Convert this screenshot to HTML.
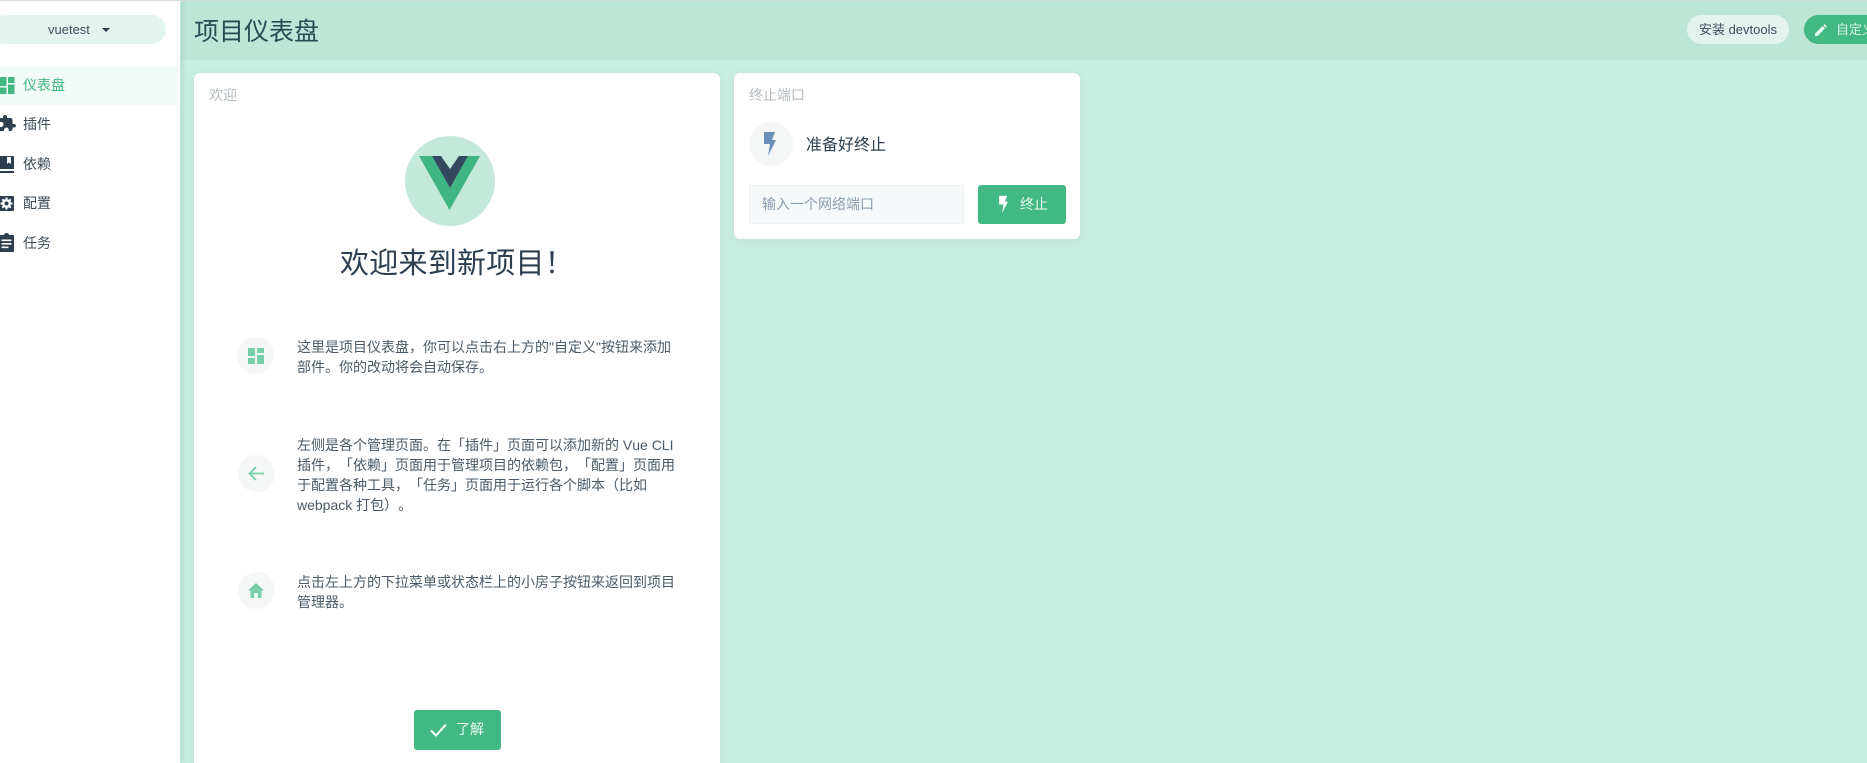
<!DOCTYPE html>
<html lang="zh"><head><meta charset="utf-8"><title>项目仪表盘</title>
<style>
*{box-sizing:border-box}
html,body{margin:0;padding:0;width:1867px;height:763px;overflow:hidden;background:#c8ecdf;font-family:"Liberation Sans","Noto Sans CJK SC",sans-serif;color:#2c3e50;text-spacing-trim:space-all;font-kerning:none}
#root{position:relative;width:1867px;height:763px;overflow:hidden}
.a{position:absolute;white-space:nowrap}
svg{display:block;position:absolute}
.card{position:absolute;background:#fff;border-radius:6px;box-shadow:0 2px 10px rgba(44,62,80,.06)}
.btn{position:absolute;background:#42b983;color:#e8f8f1;border-radius:3px;font-size:14px}
.circ{position:absolute;border-radius:50%;background:#f5f6f6}
p{margin:0;position:absolute;font-size:14px;line-height:20px;color:#4a5a68;left:297px;white-space:nowrap}
</style></head><body><div id="root">
<div class="a" style="left:0;top:0;width:1867px;height:1px;background:#d6dedb;z-index:5"></div>
<div class="a" style="left:181px;top:0;width:1686px;height:60px;background:#bde6d7"></div>
<div class="a" style="left:0;top:0;width:181px;height:763px;background:#fff;border-right:1px solid #bfe6d8;box-shadow:2px 0 4px rgba(90,170,140,.18)"></div>
<div class="a" style="left:-10px;top:15px;width:176px;height:29px;border-radius:15px;background:#e3f5ee"></div>
<div class="a" style="left:48px;top:21px;font-size:13px;line-height:17px;color:#3d4f5f">vuetest</div>
<div class="a" style="left:102px;top:28px;width:0;height:0;border:4px solid transparent;border-top-color:#2c3e50;border-bottom:0"></div>
<div class="a" style="left:0;top:66px;width:178px;height:39px;background:#f3fbf8"></div>

<svg style="left:-1px;top:77px" width="16" height="17" viewBox="0 0 16 17"><path fill="#42b983" d="M0 0h7.500v9H0zM9 0h6.500v6H9zM9 7.500h6.500V17H9zM0 10.500h7.500V17H0z"/></svg>
<div class="a" style="left:23px;top:75px;font-size:14px;line-height:20px;color:#42b983">仪表盘</div>

<svg style="left:-2px;top:115px" width="18" height="19" viewBox="0 0 18 19"><path fill="#2c3e50" d="M16 9h-1.500V5c0-1-1-2-2-2H9V1.800C9 .7 8 0 7 0S5 .7 5 1.800V3H2v4c2.500-.5 3.500 1 3.500 2.500S4 12.500 2 12v4h4c-.3-2 1-3.500 2.500-3.500S11 14 10.800 16h1.700c1 0 2-1 2-2v-1.500H16c1 0 2-.8 2-1.800S17 9 16 9z"/></svg>
<div class="a" style="left:23px;top:114px;font-size:14px;line-height:20px;color:#3b4a58">插件</div>

<svg style="left:-1px;top:155px" width="16" height="20" viewBox="0 0 16 20"><path fill="#2c3e50" d="M1 1h13a1 1 0 0 1 1 1v12H0V2a1 1 0 0 1 1-1zM0 16h15v2H0z"/><path fill="#fff" d="M8 2h4v7l-2-1.500L8 9z"/></svg>
<div class="a" style="left:23px;top:154px;font-size:14px;line-height:20px;color:#3b4a58">依赖</div>

<svg style="left:-1px;top:196px" width="15" height="15" viewBox="0 0 15 15"><path fill="#2c3e50" d="M1 0h13a1 1 0 0 1 1 1v13a1 1 0 0 1-1 1H1a1 1 0 0 1-1-1V1a1 1 0 0 1 1-1z"/><circle cx="7.500" cy="7.500" r="4.500" fill="#fff"/><path stroke="#fff" stroke-width="2" d="M7.500 1.500v12M1.500 7.500h12M3.300 3.300l8.400 8.400M11.700 3.300l-8.400 8.400"/><circle cx="7.500" cy="7.500" r="2" fill="#2c3e50"/></svg>
<div class="a" style="left:23px;top:193px;font-size:14px;line-height:20px;color:#3b4a58">配置</div>

<svg style="left:-1px;top:233px" width="15" height="19" viewBox="0 0 15 19"><path fill="#2c3e50" d="M1 2h4c0-1 1-2 2.500-2S10 1 10 2h4a1 1 0 0 1 1 1v15a1 1 0 0 1-1 1H1a1 1 0 0 1-1-1V3a1 1 0 0 1 1-1z"/><path fill="#fff" d="M2.500 6.500h10v1.600h-10zM2.500 10h10v1.600h-10zM2.500 13.500h7v1.600h-7z"/></svg>
<div class="a" style="left:23px;top:233px;font-size:14px;line-height:20px;color:#3b4a58">任务</div>

<div class="a" style="left:194px;top:14px;font-size:25px;line-height:36px;color:#2c4a52">项目仪表盘</div>
<div class="a" style="left:1687px;top:15px;width:102px;height:29px;border-radius:15px;background:#e3f3ee;font-size:13px;line-height:29px;text-align:center;color:#3d4f5f">安装 devtools</div>
<div class="a" style="left:1804px;top:15px;width:90px;height:29px;border-radius:15px;background:#42b983;color:#d8f3e7;font-size:13px;line-height:29px;padding-left:32px">自定义</div>
<svg style="left:1815px;top:24px" width="12" height="12" viewBox="0 0 12 12"><path fill="#e8f8f1" d="M0 12V9.500L7.500 2 10 4.500 2.500 12zM8.300 1.200 9.500 0 12 2.500 10.800 3.700z"/></svg>

<div class="card" style="left:194px;top:73px;width:526px;height:700px"></div>
<div class="a" style="left:209px;top:85px;font-size:14px;line-height:20px;color:#b5bcc0">欢迎</div>
<div class="a" style="left:405px;top:136px;width:90px;height:90px;border-radius:50%;background:#c4e9da"></div>
<svg style="left:418px;top:156px" width="64" height="56" viewBox="0 0 64 56"><path fill="#3fb583" d="M1 0H14L32 32 50 0H62L31.500 54Z"/><path fill="#35495e" d="M14 0H23L32 13 41 0H50L32 32Z"/></svg>
<div class="a" style="left:340px;top:244px;font-size:29px;line-height:40px;letter-spacing:.25px;color:#2c3e50">欢迎来到新项目！</div>

<div class="circ" style="left:237px;top:337px;width:37px;height:37px"></div>
<svg style="left:248px;top:348px" width="16" height="16" viewBox="0 0 16 16"><path fill="#76cfa8" d="M0 0h7v8H0zM9 0h7v5H9zM9 7h7v9H9zM0 10h7v6H0z"/></svg>
<p style="top:337px">这里是项目仪表盘，你可以点击右上方的"自定义"按钮来添加<br>部件。你的改动将会自动保存。</p>

<div class="circ" style="left:238px;top:455px;width:37px;height:37px"></div>
<svg style="left:248px;top:466px" width="16" height="15" viewBox="0 0 16 15"><path fill="none" stroke="#76cfa8" stroke-width="1.800" d="M16 7.500H2M8 1 1.500 7.500 8 14"/></svg>
<p style="top:435px">左侧是各个管理页面。在「插件」页面可以添加新的 Vue CLI<br>插件，「依赖」页面用于管理项目的依赖包，「配置」页面用<br>于配置各种工具，「任务」页面用于运行各个脚本（比如<br>webpack 打包）。</p>

<div class="circ" style="left:238px;top:572px;width:37px;height:37px"></div>
<svg style="left:248px;top:583px" width="16" height="15" viewBox="0 0 16 15"><path fill="#76cfa8" d="M8 0 16 7.500H13.500V15H9.800V10H6.200V15H2.500V7.500H0z"/></svg>
<p style="top:572px">点击左上方的下拉菜单或状态栏上的小房子按钮来返回到项目<br>管理器。</p>

<div class="btn" style="left:414px;top:710px;width:87px;height:40px"></div>
<svg style="left:430px;top:723px" width="17" height="14" viewBox="0 0 17 14"><path fill="none" stroke="#fff" stroke-width="2" d="M1 7.500 6 12.500 16 1.500"/></svg>
<div class="a" style="left:456px;top:719px;font-size:14px;line-height:20px;color:#e8f8f1">了解</div>

<div class="card" style="left:734px;top:73px;width:346px;height:166px"></div>
<div class="a" style="left:749px;top:85px;font-size:14px;line-height:20px;color:#b5bcc0">终止端口</div>
<div class="circ" style="left:749px;top:122px;width:44px;height:44px"></div>
<svg style="left:763px;top:131px" width="14" height="26" viewBox="0 0 14 26"><path fill="#6a8fb8" d="M1 1h11L9 9h4L5 25 7 13H1z"/></svg>
<div class="a" style="left:806px;top:135px;font-size:16px;line-height:22px;color:#2c3e50">准备好终止</div>
<div class="a" style="left:749px;top:185px;width:215px;height:39px;background:#f6f9f9;border:1px solid #eff3f3"></div>
<div class="a" style="left:762px;top:194px;font-size:14px;line-height:20px;color:#8a9db0">输入一个网络端口</div>
<div class="btn" style="left:978px;top:185px;width:88px;height:39px"></div>
<svg style="left:998px;top:195px" width="11" height="19" viewBox="0 0 14 26"><path fill="#fff" d="M1 1h11L9 9h4L5 25 7 13H1z"/></svg>
<div class="a" style="left:1020px;top:194px;font-size:14px;line-height:20px;color:#e8f8f1">终止</div>
</div></body></html>
